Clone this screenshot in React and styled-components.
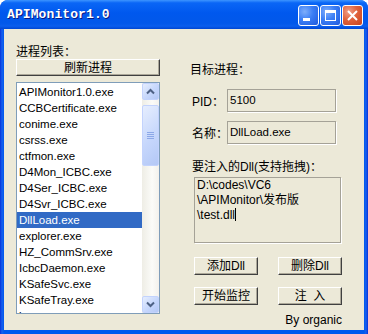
import React from 'react';
import styled, { createGlobalStyle } from 'styled-components';

const GlobalStyle = createGlobalStyle`
  html, body { margin: 0; padding: 0; background: #ffffff; }
  body { width: 368px; height: 334px; overflow: hidden; }
`;

const FONT = `"Liberation Sans", "Noto Sans CJK SC", sans-serif`;

// Style component start
const Window = styled.div`
  width: 368px;
  height: 334px;
  display: flex;
  flex-direction: column;
  background: linear-gradient(90deg, #0831D9 0px, #1661EE 2px, #0058EE 4px, #0058EE 364px, #1661EE 366px, #0831D9 368px);
  border-radius: 8px 8px 0 0;
  overflow: hidden;
  font-family: ${FONT};
`;

const TitleBar = styled.div`
  height: 29px;
  flex: none;
  display: flex;
  align-items: center;
  justify-content: space-between;
  padding: 0 5px 0 7px;
  box-sizing: border-box;
  background: linear-gradient(180deg, #3D95FF 0%, #0A66F6 10%, #0058EE 45%, #0258EA 80%, #0A5EEE 90%, #0046D2 100%);
`;

const Title = styled.div`
  font: bold 13px "Liberation Mono", monospace;
  color: #ffffff;
  text-shadow: 1px 1px 0 #0A1883;
  letter-spacing: 0.1px;
`;

const Controls = styled.div`
  display: flex;
  gap: 1px;
  margin-top: 2px;
`;

const CtrlButton = styled.div`
  width: 21px;
  height: 21px;
  box-sizing: border-box;
  border: 1px solid #ffffff;
  border-radius: 3px;
  display: flex;
  align-items: center;
  justify-content: center;
  background: ${p => p.close
    ? 'radial-gradient(circle at 30% 30%, #F0A08A 0%, #E0623C 45%, #C8431C 100%)'
    : 'radial-gradient(circle at 30% 30%, #7FAEFB 0%, #3B7EF5 45%, #1F5ADD 100%)'};
`;

const Client = styled.div`
  flex: 1;
  margin: 0 4px 4px;
  background: #ECE9D8;
  display: grid;
  grid-template-columns: 144px 152px;
  column-gap: 30px;
  padding-left: 12px;
`;

const Column = styled.div`
  display: flex;
  flex-direction: column;
  padding-top: ${p => p.top}px;
`;

const Label = styled.div`
  font-size: 12px;
  line-height: 14px;
  height: 14px;
  color: #000;
  white-space: nowrap;
  margin-top: ${p => p.gap || 0}px;
  padding-left: ${p => p.indent || 0}px;
`;

const Button = styled.button`
  width: ${p => p.w}px;
  height: 18px;
  padding: 0;
  margin: 0;
  box-sizing: border-box;
  background: #ECE9D8;
  border: 1px solid;
  border-color: #ffffff #404040 #404040 #ffffff;
  box-shadow: inset -1px -1px 0 #ACA899;
  font-family: ${FONT};
  font-size: 12px;
  line-height: 14px;
  color: #000;
`;

const ListBox = styled.div`
  margin-top: 6px;
  height: 232px;
  box-sizing: border-box;
  border: 1px solid #7F9DB9;
  background: #ffffff;
  display: flex;
  overflow: hidden;
`;

const Items = styled.ul`
  flex: 1;
  margin: 0;
  padding: 1px 0 0;
  list-style: none;
  overflow: hidden;
`;

const Item = styled.li`
  height: 16px;
  line-height: 16px;
  padding-left: 2px;
  font-size: 11.5px;
  white-space: nowrap;
  color: ${p => p.selected ? '#ffffff' : '#000000'};
  background: ${p => p.selected ? '#316AC5' : 'transparent'};
`;

const ScrollBar = styled.div`
  width: 17px;
  flex: none;
  display: flex;
  flex-direction: column;
  background: linear-gradient(90deg, #EEEDE5 0%, #FBFBF8 60%, #F3F1EC 100%);
`;

const ScrollButton = styled.div`
  height: 17px;
  flex: none;
  box-sizing: border-box;
  border: 1px solid #C3D3FD;
  border-radius: 2px;
  background: linear-gradient(135deg, #E6EEFE 0%, #C6D7FC 55%, #B4C8F6 100%);
  display: flex;
  align-items: center;
  justify-content: center;
`;

const Track = styled.div`
  flex: 1;
  display: flex;
  flex-direction: column;
`;

const Thumb = styled(ScrollButton)`
  margin-top: 5px;
  height: 61px;
`;

const FieldRow = styled.div`
  display: flex;
  align-items: center;
  margin-top: ${p => p.gap}px;
  height: 23px;
`;

const FieldLabel = styled.div`
  width: 35px;
  padding-left: 2px;
  font-size: 12px;
  white-space: nowrap;
`;

const Field = styled.div`
  width: 109px;
  height: 23px;
  box-sizing: border-box;
  border: 1px solid #A5A297;
  box-shadow: 1px 1px 0 #ffffff;
  padding-left: 2px;
  font-size: 11.5px;
  line-height: 21px;
  color: #000;
`;

const TextArea = styled.div`
  margin: 3px 0 0 4px;
  width: 147px;
  height: 66px;
  box-sizing: border-box;
  border: 1px solid #A5A297;
  box-shadow: 1px 1px 0 #ffffff;
  padding: 0 0 0 2px;
  font-size: 12px;
  line-height: 15px;
  color: #000;
  white-space: pre;
`;

const Caret = styled.span`
  display: inline-block;
  width: 1px;
  height: 13px;
  background: #000;
  vertical-align: -2px;
`;

const ButtonGrid = styled.div`
  display: grid;
  grid-template-columns: 64px 64px;
  column-gap: 20px;
  row-gap: 12px;
  margin: 14px 0 0 4px;
`;

const Credit = styled.div`
  margin-top: 8px;
  font-size: 12px;
  line-height: 14px;
  text-align: right;
  color: #000;
`;
// Style component end

const processes = [
  'APIMonitor1.0.exe', 'CCBCertificate.exe', 'conime.exe', 'csrss.exe',
  'ctfmon.exe', 'D4Mon_ICBC.exe', 'D4Ser_ICBC.exe', 'D4Svr_ICBC.exe',
  'DllLoad.exe', 'explorer.exe', 'HZ_CommSrv.exe', 'IcbcDaemon.exe',
  'KSafeSvc.exe', 'KSafeTray.exe', 'lsass.exe',
];

const Chevron = ({ up }) => (
  <svg width="9" height="7" viewBox="0 0 9 7">
    <path d={up ? 'M1 5.5 L4.5 2 L8 5.5' : 'M1 1.5 L4.5 5 L8 1.5'} fill="none" stroke="#4D6185" strokeWidth="2" />
  </svg>
);

const App = () => (
  <>
    <GlobalStyle />
    <Window>
      <TitleBar>
        <Title>APIMonitor1.0</Title>
        <Controls>
          <CtrlButton>
            <svg width="19" height="19" viewBox="0 0 19 19"><rect x="4" y="12" width="7" height="3" fill="#fff" /></svg>
          </CtrlButton>
          <CtrlButton>
            <svg width="19" height="19" viewBox="0 0 19 19">
              <rect x="4.5" y="4.5" width="10" height="10" fill="none" stroke="#fff" strokeWidth="1" />
              <rect x="4" y="4" width="11" height="3" fill="#fff" />
            </svg>
          </CtrlButton>
          <CtrlButton close>
            <svg width="19" height="19" viewBox="0 0 19 19">
              <path d="M5 5 L14 14 M14 5 L5 14" stroke="#fff" strokeWidth="2" />
            </svg>
          </CtrlButton>
        </Controls>
      </TitleBar>

      <Client>
        <Column top={16}>
          <Label>进程列表：</Label>
          <Button w={144} style={{ height: 17 }}>刷新进程</Button>
          <ListBox>
            <Items>
              {processes.map(name => (
                <Item key={name} selected={name === 'DllLoad.exe'}>{name}</Item>
              ))}
            </Items>
            <ScrollBar>
              <ScrollButton><Chevron up /></ScrollButton>
              <Track>
                <Thumb>
                  <svg width="7" height="8" viewBox="0 0 7 8">
                    <path d="M0 0.5 H7 M0 2.5 H7 M0 4.5 H7 M0 6.5 H7" stroke="#8CA8E8" strokeWidth="1" />
                  </svg>
                </Thumb>
              </Track>
              <ScrollButton><Chevron /></ScrollButton>
            </ScrollBar>
          </ListBox>
        </Column>

        <Column top={34}>
          <Label>目标进程：</Label>
          <FieldRow gap={12}>
            <FieldLabel>PID：</FieldLabel>
            <Field>5100</Field>
          </FieldRow>
          <FieldRow gap={9}>
            <FieldLabel>名称：</FieldLabel>
            <Field>DllLoad.exe</Field>
          </FieldRow>
          <Label gap={16} indent={2}>要注入的Dll(支持拖拽)：</Label>
          <TextArea>
            {'D:\\codes\\VC6\n\\APIMonitor\\发布版\n\\test.dll'}<Caret />
          </TextArea>
          <ButtonGrid>
            <Button w={64}>添加Dll</Button>
            <Button w={64}>删除Dll</Button>
            <Button w={64}>开始监控</Button>
            <Button w={64}>注&nbsp;&nbsp;入</Button>
          </ButtonGrid>
          <Credit>By organic</Credit>
        </Column>
      </Client>
    </Window>
  </>
);

export default App;
